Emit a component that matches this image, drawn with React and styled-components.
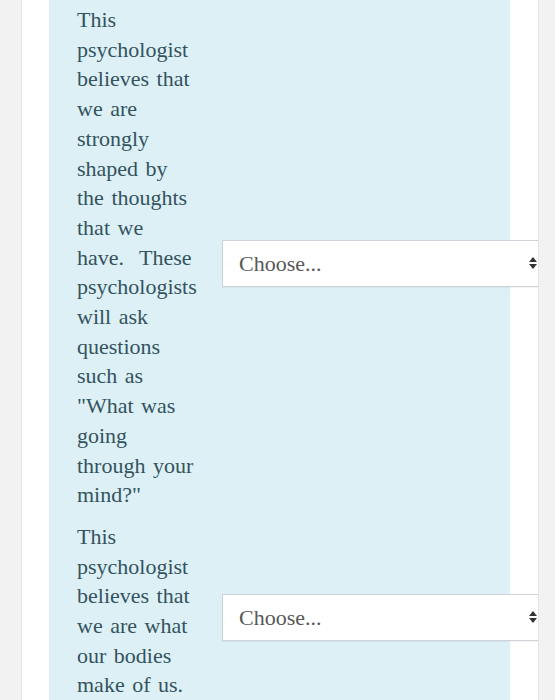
import React from "react";
import styled, { createGlobalStyle } from "styled-components";

const GlobalStyle = createGlobalStyle`
  html, body {
    margin: 0;
    height: 100%;
    overflow: hidden;
  }
  #root {
    height: 100%;
  }
`;

const Page = styled.div`
  height: 100%;
  box-sizing: border-box;
  background: #f2f2f2;
  padding: 0 16px 0 21px;
`;

const Card = styled.div`
  height: 100%;
  box-sizing: border-box;
  background: #fff;
  border-left: 1px solid #e4e4e4;
  border-right: 1px solid #e4e4e4;
  padding-left: 27px;
  overflow: hidden;
`;

const Formulation = styled.div`
  width: 461px;
  height: 100%;
  box-sizing: border-box;
  background: #dcf0f6;
  padding: 5px 0 0 28px;
  font-family: "Liberation Serif", "Times New Roman", serif;
  font-size: 22px;
  line-height: 29.7px;
  color: #34535e;
`;

const MatchRow = styled.div`
  display: grid;
  grid-template-columns: 123px auto;
  column-gap: 22px;
  align-items: center;
`;

const Prompt = styled.p`
  margin: 0 0 12px;
  word-spacing: 2px;
`;

const SelectBox = styled.div`
  position: relative;
  width: 330px;
  height: 47px;
`;

const Select = styled.select`
  appearance: none;
  -webkit-appearance: none;
  width: 100%;
  height: 100%;
  box-sizing: border-box;
  margin: 0;
  padding: 0 36px 0 16px;
  background: #fff;
  border: 1px solid #cdd3d8;
  border-radius: 0;
  box-shadow: 0 1px 1px rgba(0, 0, 0, 0.04);
  font: inherit;
  font-family: "Liberation Serif", "Times New Roman", serif;
  font-size: 22px;
  line-height: normal;
  color: #585858;
  outline: none;

  option {
    font-family: "Liberation Serif", "Times New Roman", serif;
  }
`;

const Arrows = styled.svg`
  position: absolute;
  right: 15px;
  top: 50%;
  transform: translateY(-50%);
  pointer-events: none;
`;

function ChooseSelect() {
  return (
    <SelectBox>
      <Select defaultValue="">
        <option value="">Choose...</option>
        <option value="cognitive">Cognitive</option>
        <option value="biological">Biological</option>
      </Select>
      <Arrows width="8" height="14" viewBox="0 0 8 14">
        <path d="M4 1 L8 6 H0 Z" fill="#333" />
        <path d="M4 13 L0 8 H8 Z" fill="#333" />
      </Arrows>
    </SelectBox>
  );
}

const items = [
  'This psychologist believes that we are strongly shaped by the thoughts that we have.\u00a0\u00a0These psychologists will ask questions such as "What was going through your mind?"',
  "This psychologist believes that we are what our bodies make of us.",
];

export default function App() {
  return (
    <>
      <GlobalStyle />
      <Page>
        <Card>
          <Formulation>
            {items.map((text) => (
              <MatchRow key={text}>
                <Prompt>{text}</Prompt>
                <ChooseSelect />
              </MatchRow>
            ))}
          </Formulation>
        </Card>
      </Page>
    </>
  );
}
